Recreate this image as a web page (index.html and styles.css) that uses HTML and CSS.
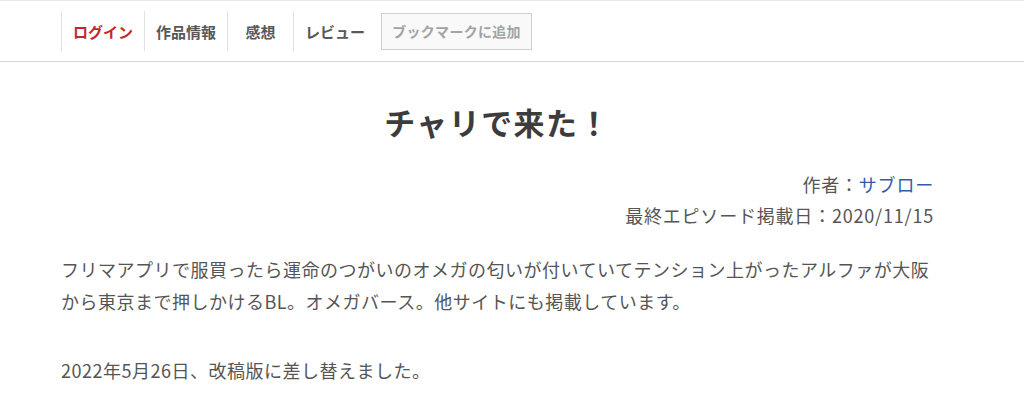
FILE: index.html
```html
<!DOCTYPE html>
<html lang="ja">
<head>
<meta charset="utf-8">
<title>チャリで来た！</title>
<link rel="stylesheet" href="styles.css">
</head>
<body>
<header class="site-header">
  <nav class="nav">
    <a class="nav-item nav-login" href="#">ログイン</a>
    <a class="nav-item" href="#">作品情報</a>
    <a class="nav-item" href="#">感想</a>
    <a class="nav-item" href="#">レビュー</a>
    <button class="bookmark" type="button">ブックマークに追加</button>
  </nav>
</header>
<main class="work">
  <h1 class="title">チャリで来た！</h1>
  <div class="meta">
    <p class="meta-line">作者：<a class="author" href="#">サブロー</a></p>
    <p class="meta-line">最終エピソード掲載日：2020/11/15</p>
  </div>
  <div class="summary">
    <p>フリマアプリで服買ったら運命のつがいのオメガの匂いが付いていてテンション上がったアルファが大阪から東京まで押しかけるBL。オメガバース。他サイトにも掲載しています。</p>
    <p class="note">2022年5月26日、改稿版に差し替えました。</p>
  </div>
</main>
</body>
</html>
```

FILE: styles.css
```css
html, body {
  margin: 0;
  padding: 0;
  background: #fff;
}

body {
  font-family: "Noto Sans CJK JP", "Noto Sans", sans-serif;
  color: #555;
}

.site-header {
  border-top: 1px solid #e6e6e6;
  border-bottom: 1px solid #d8d8d8;
  height: 60px;
}

.nav {
  display: flex;
  align-items: center;
  margin-left: 61px;
  padding-top: 10px;
  height: 40px;
}

.nav-item {
  box-sizing: border-box;
  min-width: 66px;
  height: 40px;
  padding: 0 11px;
  border-left: 1px solid #e2e2e2;
  display: flex;
  align-items: center;
  justify-content: center;
  font-size: 15px;
  font-weight: bold;
  color: #585858;
  text-decoration: none;
}

.nav-login {
  color: #c1272d;
}

.bookmark {
  margin-left: 5px;
  height: 37px;
  width: 151px;
  padding: 0;
  border: 1px solid #cfcfcf;
  background: #f9f9f9;
  color: #a3a3a3;
  font-family: inherit;
  font-size: 14px;
  font-weight: bold;
  letter-spacing: 0.3px;
}

.work {
  width: 873px;
  margin-left: 61px;
}

.title {
  margin: 40px 0 0;
  text-align: center;
  font-size: 31px;
  line-height: 40px;
  letter-spacing: 1.4px;
  color: #3c3c3c;
}

.meta {
  margin-top: 27px;
  text-align: right;
  font-size: 18px;
  letter-spacing: 0.8px;
}

.meta-line {
  margin: 0;
  line-height: 31px;
}

.author {
  color: #2f5ea8;
  text-decoration: none;
}

.summary {
  margin-top: 22px;
  font-size: 18px;
  letter-spacing: 0.5px;
}

.summary p {
  margin: 0;
  line-height: 32px;
}

.summary .note {
  margin-top: 37px;
}
```
